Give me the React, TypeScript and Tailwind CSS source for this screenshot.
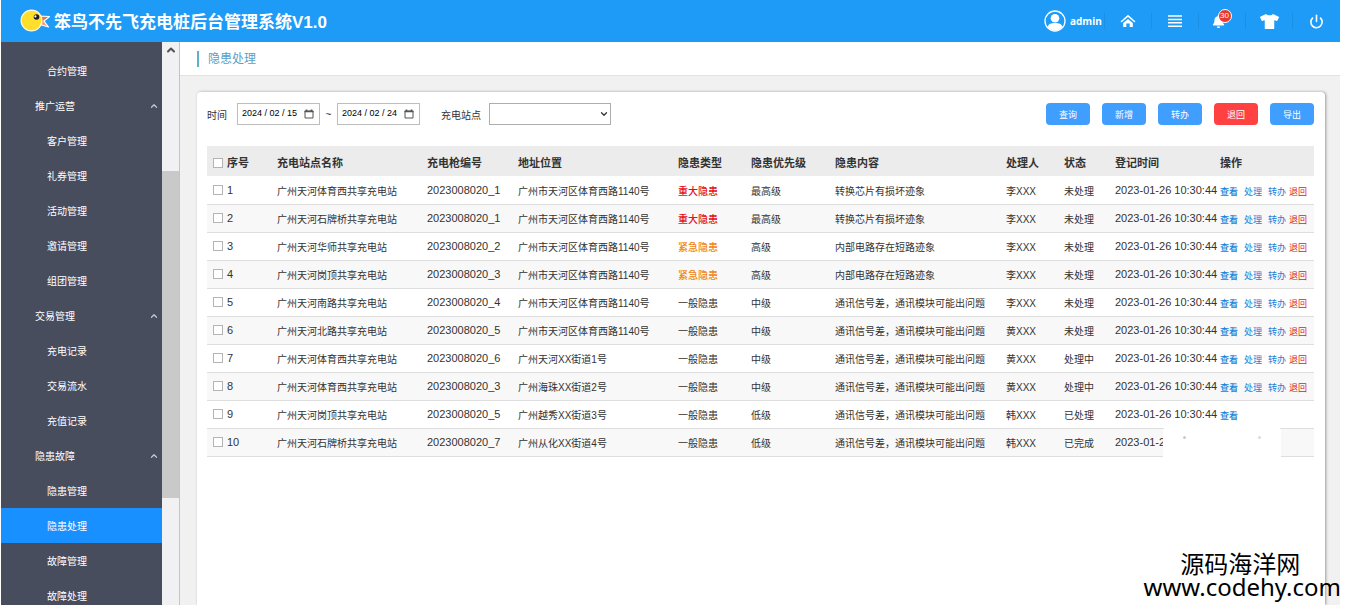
import { useState } from 'react';
import { FaBell, FaTshirt } from 'react-icons/fa';
import { ChevronUp, ChevronDown, Power } from 'lucide-react';

type MenuItem = { label: string; group?: boolean };

const menu: MenuItem[] = [
  { label: '站点管理' },
  { label: '合约管理' },
  { label: '推广运营', group: true },
  { label: '客户管理' },
  { label: '礼券管理' },
  { label: '活动管理' },
  { label: '邀请管理' },
  { label: '组团管理' },
  { label: '交易管理', group: true },
  { label: '充电记录' },
  { label: '交易流水' },
  { label: '充值记录' },
  { label: '隐患故障', group: true },
  { label: '隐患管理' },
  { label: '隐患处理' },
  { label: '故障管理' },
  { label: '故障处理' },
];

type Row = {
  id: number;
  station: string;
  gun: string;
  address: string;
  type: string;
  level: string;
  content: string;
  handler: string;
  status: string;
};

const rows: Row[] = [
  { id: 1, station: '广州天河体育西共享充电站', gun: '2023008020_1', address: '广州市天河区体育西路1140号', type: '重大隐患', level: '最高级', content: '转换芯片有损坏迹象', handler: '李XXX', status: '未处理' },
  { id: 2, station: '广州天河石牌桥共享充电站', gun: '2023008020_1', address: '广州市天河区体育西路1140号', type: '重大隐患', level: '最高级', content: '转换芯片有损坏迹象', handler: '李XXX', status: '未处理' },
  { id: 3, station: '广州天河华师共享充电站', gun: '2023008020_2', address: '广州市天河区体育西路1140号', type: '紧急隐患', level: '高级', content: '内部电路存在短路迹象', handler: '李XXX', status: '未处理' },
  { id: 4, station: '广州天河岗顶共享充电站', gun: '2023008020_3', address: '广州市天河区体育西路1140号', type: '紧急隐患', level: '高级', content: '内部电路存在短路迹象', handler: '李XXX', status: '未处理' },
  { id: 5, station: '广州天河南路共享充电站', gun: '2023008020_4', address: '广州市天河区体育西路1140号', type: '一般隐患', level: '中级', content: '通讯信号差，通讯模块可能出问题', handler: '李XXX', status: '未处理' },
  { id: 6, station: '广州天河北路共享充电站', gun: '2023008020_5', address: '广州市天河区体育西路1140号', type: '一般隐患', level: '中级', content: '通讯信号差，通讯模块可能出问题', handler: '黄XXX', status: '未处理' },
  { id: 7, station: '广州天河体育西共享充电站', gun: '2023008020_6', address: '广州天河XX街道1号', type: '一般隐患', level: '中级', content: '通讯信号差，通讯模块可能出问题', handler: '黄XXX', status: '处理中' },
  { id: 8, station: '广州天河体育西共享充电站', gun: '2023008020_3', address: '广州海珠XX街道2号', type: '一般隐患', level: '中级', content: '通讯信号差，通讯模块可能出问题', handler: '黄XXX', status: '处理中' },
  { id: 9, station: '广州天河岗顶共享充电站', gun: '2023008020_5', address: '广州越秀XX街道3号', type: '一般隐患', level: '低级', content: '通讯信号差，通讯模块可能出问题', handler: '韩XXX', status: '已处理' },
  { id: 10, station: '广州天河石牌桥共享充电站', gun: '2023008020_7', address: '广州从化XX街道4号', type: '一般隐患', level: '低级', content: '通讯信号差，通讯模块可能出问题', handler: '韩XXX', status: '已完成' },
];

const typeStyles: Record<string, string> = {
  重大隐患: 'text-[#e3101c] font-medium',
  紧急隐患: 'text-[#f08519] font-medium',
  一般隐患: '',
};

const columns = [
  { label: '充电站点名称', width: 'w-[150px]' },
  { label: '充电枪编号', width: 'w-[91px]' },
  { label: '地址位置', width: 'w-[160px]' },
  { label: '隐患类型', width: 'w-[73px]' },
  { label: '隐患优先级', width: 'w-[84px]' },
  { label: '隐患内容', width: 'w-[171px]' },
  { label: '处理人', width: 'w-[58px]' },
  { label: '状态', width: 'w-[51px]' },
  { label: '登记时间', width: 'w-[105px]' },
  { label: '操作', width: 'w-[94px]' },
];

const buttons = [
  { label: '查询', color: 'bg-[#409eff]' },
  { label: '新增', color: 'bg-[#409eff]' },
  { label: '转办', color: 'bg-[#409eff]' },
  { label: '退回', color: 'bg-[#ff4141]' },
  { label: '导出', color: 'bg-[#409eff]' },
];

const checkbox =
  'appearance-none block size-[10px] shrink-0 bg-white border border-[#b4b4b4] checked:bg-[#409eff]';

function Logo() {
  return (
    <svg viewBox="0 0 30 24" className="w-[30px] h-6" aria-hidden="true">
      <path d="M19 7 L29.5 7.5 L24 12 L28.5 18 L18 15 Z" fill="#f6a07c" stroke="#fff" strokeWidth="1.2" strokeLinejoin="round" />
      <path d="M20 8 L28 8 L22 12 Z" fill="#e8743f" />
      <circle cx="11.5" cy="11.5" r="10.4" fill="#ffdf2b" stroke="#fffbe0" strokeWidth="1.2" />
      <circle cx="16.5" cy="8" r="2.8" fill="#1d1d1d" />
      <circle cx="15.4" cy="7.4" r="1.1" fill="#fff" />
    </svg>
  );
}

function Avatar() {
  return (
    <svg viewBox="0 0 22 22" className="size-[22px]" aria-hidden="true">
      <circle cx="11" cy="11" r="10" fill="none" stroke="#fff" strokeWidth="1.3" />
      <circle cx="11" cy="8.3" r="4.3" fill="#fff" />
      <path d="M3.6 17 C4.5 13.8 7 13 11 13 C15 13 17.5 13.8 18.4 17 C16.5 19.4 14 20.4 11 20.4 C8 20.4 5.5 19.4 3.6 17 Z" fill="#fff" />
    </svg>
  );
}

function HomeIcon() {
  return (
    <svg viewBox="0 0 16 14" className="w-4 h-3.5" aria-hidden="true">
      <path d="M1.5 7.5 L8 1.8 L14.5 7.5" fill="none" stroke="#fff" strokeWidth="1.6" strokeLinecap="round" strokeLinejoin="round" />
      <path d="M3.2 8.9 L8 4.9 L12.8 8.9 V13 H9.7 V9.4 H6.3 V13 H3.2 Z" fill="#fff" />
    </svg>
  );
}

function MenuIcon() {
  return (
    <svg viewBox="0 0 14 12" className="w-3.5 h-3" aria-hidden="true">
      <path d="M0 1 H14 M0 4.4 H14 M0 7.8 H14 M0 11.2 H14" stroke="#fff" strokeWidth="1.5" />
    </svg>
  );
}

function CalendarIcon() {
  return (
    <svg viewBox="0 0 10 10" className="size-[10px] shrink-0" aria-hidden="true">
      <path d="M1 2 H9 V9 H1 Z" fill="none" stroke="#555" strokeWidth="1" />
      <path d="M0.5 2.5 H9.5 M2.5 0.5 V2 M7.5 0.5 V2" stroke="#555" strokeWidth="1.6" />
    </svg>
  );
}

function DateInput({ label, value, onChange }: { label: string; value: string; onChange: (v: string) => void }) {
  return (
    <div className="flex items-center w-[83px] h-[22px] pl-1 pr-[5px] border border-[#bdbdbd] bg-white">
      <input
        type="text"
        aria-label={label}
        value={value}
        onChange={(e) => onChange(e.target.value)}
        className="flex-1 min-w-0 text-[9px] text-black outline-none"
      />
      <CalendarIcon />
    </div>
  );
}

export default function App() {
  const [active, setActive] = useState('隐患处理');
  const [start, setStart] = useState('2024 / 02 / 15');
  const [end, setEnd] = useState('2024 / 02 / 24');

  const iconCell = 'flex items-center justify-center w-[47px] h-4 border-l border-[#1b8ee6]';

  return (
    <div className="relative flex flex-col h-screen overflow-hidden pl-px pr-[5px] bg-white font-['Liberation_Sans','Noto_Sans_CJK_SC',sans-serif] text-[10px] text-[#333]">
      {/* 顶部栏 */}
      <header className="flex items-center h-[42px] shrink-0 pl-[19px] pr-px bg-[#1e9bf7] text-white">
        <Logo />
        <h1 className="ml-1 pt-[3px] text-[17px] font-bold whitespace-nowrap">笨鸟不先飞充电桩后台管理系统V1.0</h1>
        <div className="flex items-center ml-auto">
          <Avatar />
          <span className="w-[38px] pl-1 font-['Open_Sans',sans-serif] font-bold">admin</span>
          <button aria-label="首页" className={iconCell}><HomeIcon /></button>
          <button aria-label="菜单" className={iconCell}><MenuIcon /></button>
          <button aria-label="消息" className={iconCell}>
            <span className="relative mr-2">
              <FaBell className="size-[13px]" />
              <span className="absolute -top-[6px] left-[6px] flex items-center justify-center size-[14px] rounded-full border border-white bg-[#e8392f] text-[8px] leading-none">30</span>
            </span>
          </button>
          <button aria-label="换肤" className={iconCell}><FaTshirt className="size-[19px]" /></button>
          <button aria-label="退出" className={iconCell}><Power className="size-[15px]" strokeWidth={2.5} /></button>
        </div>
      </header>

      <div className="flex flex-1 min-h-0">
        {/* 侧边菜单 */}
        <nav className="w-[161px] shrink-0 overflow-hidden bg-[#484d5e] text-white">
          <ul className="-mt-6">
            {menu.map((item) => (
              <li key={item.label}>
                <a
                  href="#"
                  onClick={() => setActive(item.label)}
                  className={`flex items-center justify-between h-[35px] pt-px pr-[3px] ${item.group ? 'pl-[34px]' : 'pl-[46px]'} ${
                    active === item.label ? 'bg-[#1890ff]' : ''
                  }`}
                >
                  {item.label}
                  {item.group && <ChevronUp className="size-[10px] text-[#c3c7d2]" strokeWidth={3} />}
                </a>
              </li>
            ))}
          </ul>
        </nav>

        {/* 滚动条 */}
        <div className="flex flex-col w-[18px] shrink-0 bg-[#f1f1f3] border-r border-[#c4c4c4]">
          <div className="flex items-start justify-center h-[23%] pt-[2px]">
            <ChevronUp className="size-3 text-[#505050]" strokeWidth={4} />
          </div>
          <div className="h-[58%] bg-[#c9c9c9]" />
        </div>

        <main className="flex flex-col flex-1 min-w-0 bg-[#f1f1f1]">
          <div className="flex items-center h-[34px] shrink-0 pl-[17px] bg-white border-b border-[#e2e2e2]">
            <h2 className="pl-[9px] border-l-2 border-[#5fb0c9] text-xs leading-4 text-[#5a9fc4]">隐患处理</h2>
          </div>

          <section className="relative flex-1 mt-4 ml-[17px] mr-[15px] pl-[10px] pr-[11px] pt-[11px] bg-white rounded-t-sm shadow-[1px_0_3px_#999]">
            {/* 查询条件 */}
            <div className="flex items-center h-[22px]">
              <span className="w-[30px] pt-[2px]">时间</span>
              <DateInput label="开始时间" value={start} onChange={setStart} />
              <span className="w-[17px] text-center">~</span>
              <DateInput label="结束时间" value={end} onChange={setEnd} />
              <label htmlFor="station" className="ml-[21px] w-12 pt-[2px]">充电站点</label>
              <div className="relative w-[122px]">
                <select id="station" className="appearance-none block w-full h-[22px] border border-[#adadad] bg-white">
                  <option value=""></option>
                </select>
                <ChevronDown className="absolute right-[2px] top-[6px] size-[10px] pointer-events-none text-[#333]" strokeWidth={3} />
              </div>
              <div className="flex gap-3 ml-auto">
                {buttons.map((b) => (
                  <button key={b.label} className={`w-11 h-[22px] pt-[3px] rounded text-[9px] text-white ${b.color}`}>
                    {b.label}
                  </button>
                ))}
              </div>
            </div>

            {/* 列表 */}
            <table className="w-full mt-[21px] table-fixed border-collapse text-left whitespace-nowrap">
              <thead>
                <tr className="h-[30px] bg-[#ececec] text-[11px]">
                  <th className="w-[70px] p-0 pt-1 pl-[6px]">
                    <label className="flex items-center gap-1">
                      <input type="checkbox" className={checkbox} />
                      序号
                    </label>
                  </th>
                  {columns.map((col) => (
                    <th key={col.label} className={`p-0 pt-1 ${col.width}`}>{col.label}</th>
                  ))}
                </tr>
              </thead>
              <tbody>
                {rows.map((row) => (
                  <tr key={row.id} className="h-7 border-b border-[#dedede] even:bg-[#f8f8f8]">
                    <td className="p-0 pl-[6px] text-[11px]">
                      <label className="flex items-center gap-1">
                        <input type="checkbox" className={checkbox} />
                        {row.id}
                      </label>
                    </td>
                    <td className="p-0 pt-[3px]">{row.station}</td>
                    <td className="p-0 text-[11px]">{row.gun}</td>
                    <td className="p-0 pt-[3px]">{row.address}</td>
                    <td className={`p-0 pt-[3px] ${typeStyles[row.type]}`}>{row.type}</td>
                    <td className="p-0 pt-[3px]">{row.level}</td>
                    <td className="p-0 pt-[3px]">{row.content}</td>
                    <td className="p-0 pt-[3px]">{row.handler}</td>
                    <td className="p-0 pt-[3px]">{row.status}</td>
                    <td className="p-0 text-[11px]">2023-01-26 10:30:44</td>
                    <td className="p-0 pt-[5px] text-[9px] text-[#1583d8]">
                      {row.id < 10 && <a href="#" className="font-medium">查看</a>}
                      {row.id < 9 && (
                        <>
                          <a href="#" className="ml-[6px]">处理</a>
                          <a href="#" className="ml-[6px]">转办</a>
                          <a href="#" className="ml-[3px] text-[#e02020]">退回</a>
                        </>
                      )}
                    </td>
                  </tr>
                ))}
              </tbody>
            </table>

            {/* 遮罩 */}
            <div className="absolute right-11 top-[332px] flex items-start justify-between w-[118px] h-10 pt-3 px-5 rounded-t-lg bg-white">
              <span className="w-[3px] h-[3px] rounded-full bg-[#c8c8c8]" />
              <span className="w-[3px] h-[3px] rounded-full bg-[#dcdcdc]" />
            </div>
          </section>
        </main>
      </div>

      {/* 水印 */}
      <div className="absolute right-1 bottom-2 flex flex-col items-center text-black pointer-events-none">
        <span className="pr-1 text-2xl leading-6">源码海洋网</span>
        <span className="font-['Noto_Sans',sans-serif] text-2xl leading-5">www.codehy.com</span>
      </div>
    </div>
  );
}
